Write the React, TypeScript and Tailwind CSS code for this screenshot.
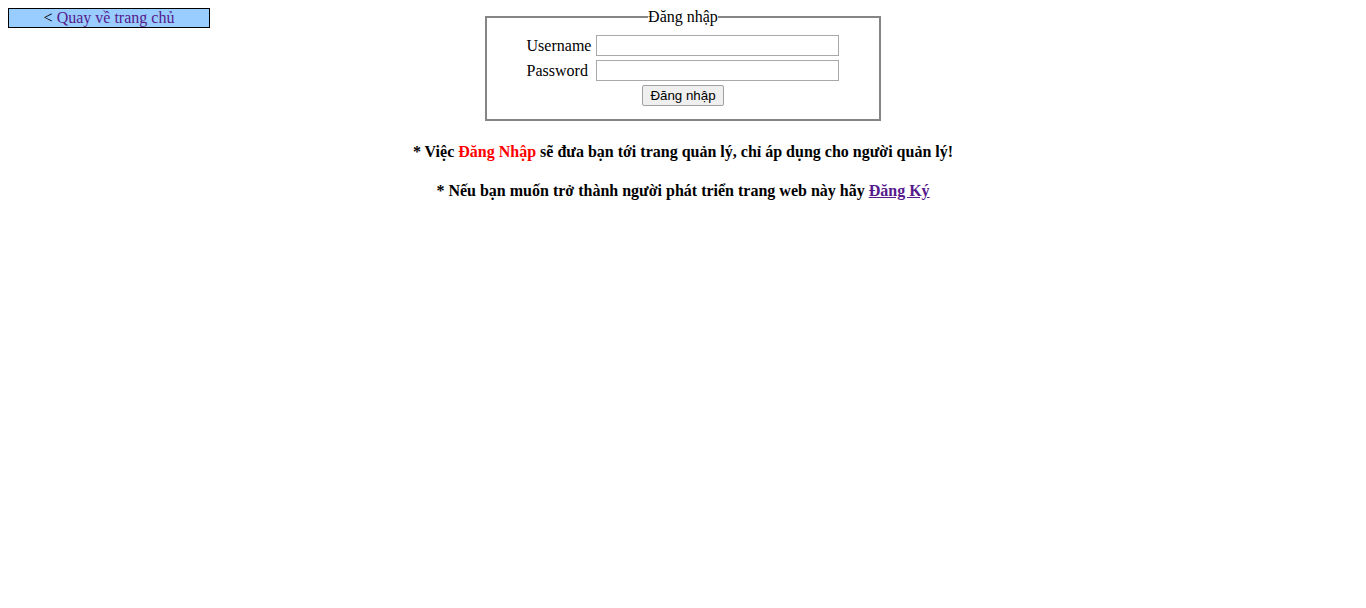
import React from 'react';

// ── Login page ────────────────────────────────────────────────────────────────

function BackLink() {
  return (
    <div className="w-[202px] h-5 border border-black bg-[#99ccff] text-center leading-[18px]">
      <span className="text-black">&lt; </span>
      <a href="#" className="text-[#551a8b] no-underline">Quay về trang chủ</a>
    </div>
  );
}

function LoginBox() {
  return (
    <fieldset className="w-[396px] border-2 border-[#858585] border-solid px-[12px] pb-[13px] pt-[9px]">
      <legend className="mx-auto px-0 leading-[18px] text-black">Đăng nhập</legend>
      <div className="flex flex-col items-center">
        <div className="grid grid-cols-[auto_243px] items-center gap-x-[5px] gap-y-[4px]">
          <label className="leading-[18px] text-black">Username</label>
          <input type="text" className="h-[21px] border border-[#a9a9a9] bg-white px-1 text-[13px] outline-none" />
          <label className="leading-[18px] text-black">Password</label>
          <input type="password" className="h-[21px] border border-[#a9a9a9] bg-white px-1 text-[13px] outline-none" />
        </div>
        <button className="mt-[4px] h-[21px] w-[82px] rounded-[2px] border border-[#a0a0a0] bg-[#efefef] font-['Liberation_Sans',sans-serif] text-[13.33px] leading-[19px] text-black">
          Đăng nhập
        </button>
      </div>
    </fieldset>
  );
}

export default function App() {
  return (
    <div className="min-h-[608px] bg-white p-2 font-['Liberation_Serif',serif] text-[16px] leading-[normal] text-black">
      <div className="grid grid-cols-[1fr_auto_1fr]">
        <div>
          <BackLink />
        </div>
        <LoginBox />
        <div />
      </div>

      <p className="mt-[22px] text-center font-bold leading-[18px]">
        * Việc <span className="text-[#ff0000]">Đăng Nhập</span> sẽ đưa bạn tới trang quản lý, chỉ áp dụng cho người quản lý!
      </p>
      <p className="mt-[21px] text-center font-bold leading-[18px]">
        * Nếu bạn muốn trở thành người phát triển trang web này hãy{' '}
        <a href="#" className="text-[#551a8b] underline">Đăng Ký</a>
      </p>
    </div>
  );
}
